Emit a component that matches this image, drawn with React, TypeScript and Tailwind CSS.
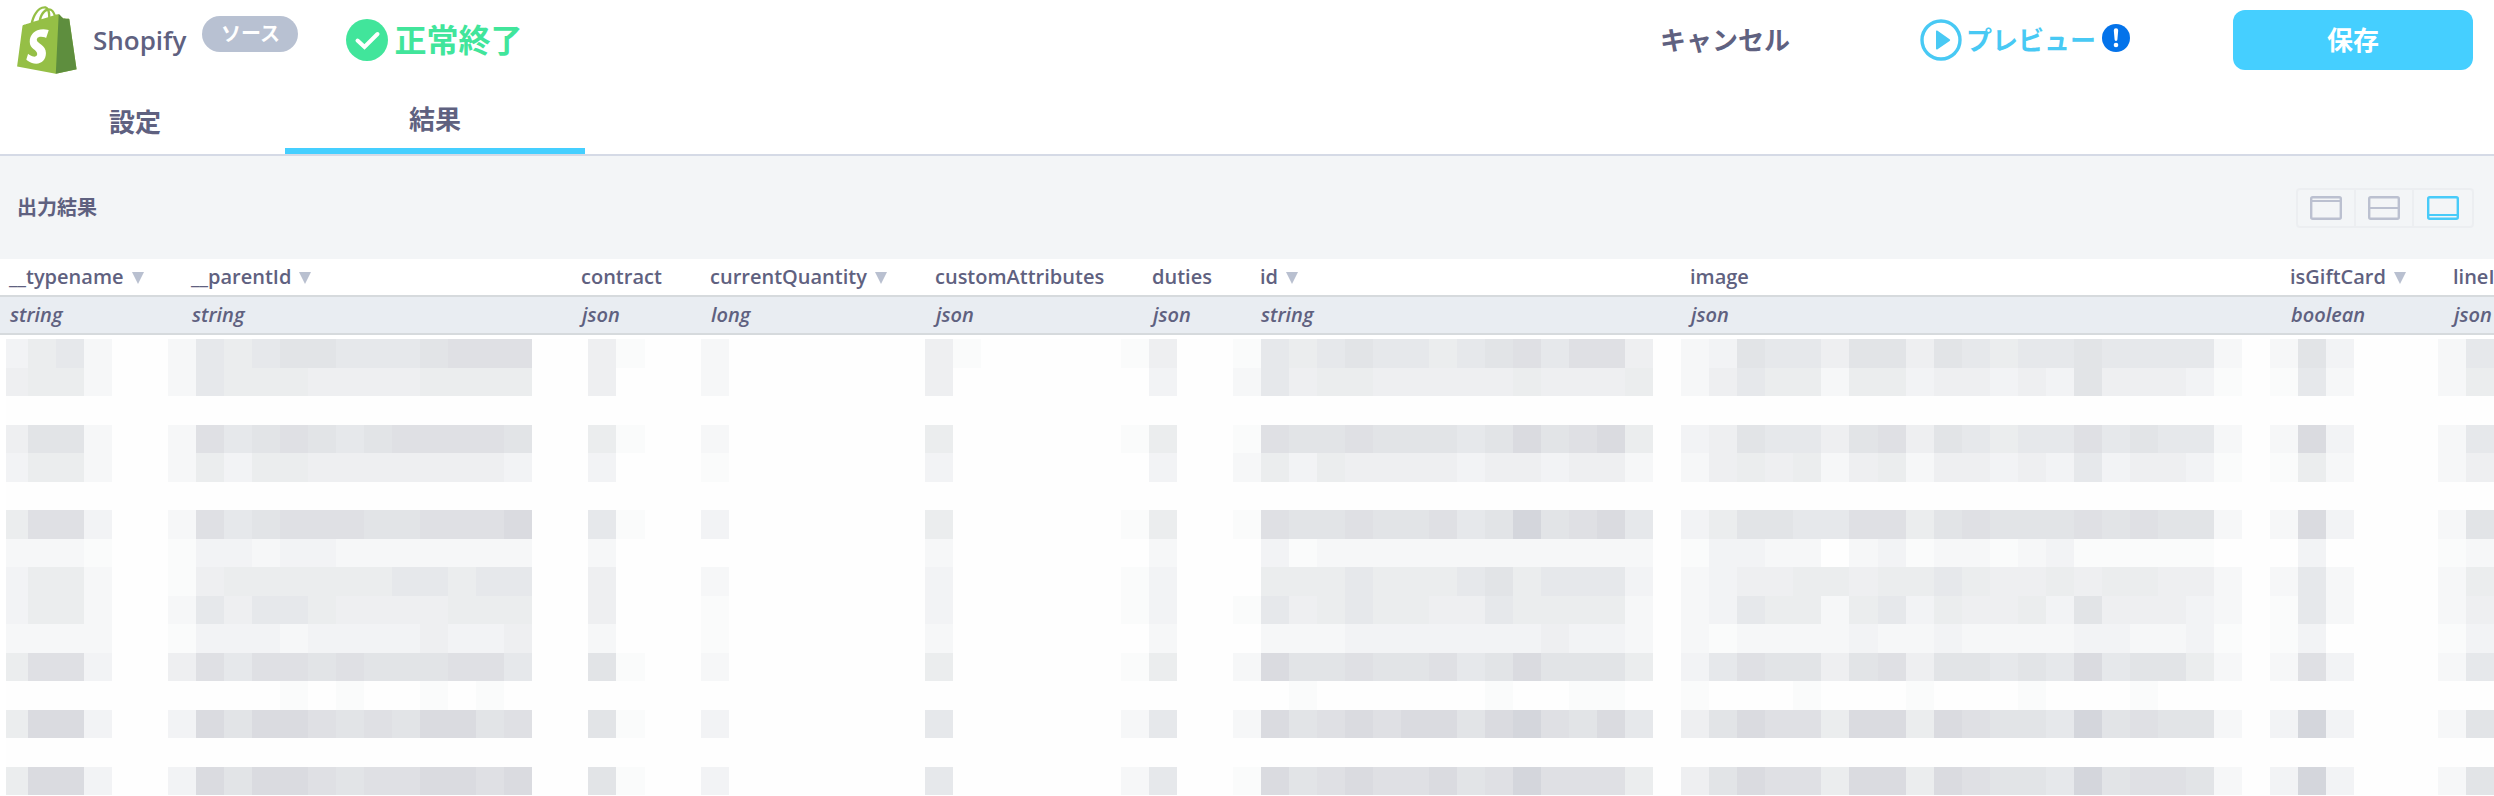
import { useState } from 'react';

type Column = { name: string; type: string; width: string; sortable?: boolean };

const columns: Column[] = [
  { name: '__typename', type: 'string', width: 'w-[182px]', sortable: true },
  { name: '__parentId', type: 'string', width: 'w-[390px]', sortable: true },
  { name: 'contract', type: 'json', width: 'w-[129px]' },
  { name: 'currentQuantity', type: 'long', width: 'w-[225px]', sortable: true },
  { name: 'customAttributes', type: 'json', width: 'w-[217px]' },
  { name: 'duties', type: 'json', width: 'w-[108px]' },
  { name: 'id', type: 'string', width: 'w-[430px]', sortable: true },
  { name: 'image', type: 'json', width: 'w-[600px]' },
  { name: 'isGiftCard', type: 'boolean', width: 'w-[163px]', sortable: true },
  { name: 'lineItem', type: 'json', width: 'w-[140px]' },
];

// Shades of the masked cells, from blank to darkest
const shades: Record<string, string> = {
  '.': '#fefefe',
  a: '#fafbfb',
  b: '#f6f7f8',
  c: '#f2f3f5',
  d: '#eeeff1',
  e: '#ebedee',
  f: '#e6e8eb',
  g: '#e2e4e7',
  h: '#dfe0e4',
  i: '#dadbe0',
  j: '#d4d6dc',
};

const MASK_COLUMNS = 89;

// First mask cell of every block in a row
const blockStarts = [0, 6, 21, 25, 33, 40, 44, 60, 81, 87];

const maskRows = [
  ['cefb', 'bfefggfffghhh', 'da', 'b', 'da', 'ad', 'afefgffefghfhhd', 'bcgffdggdgfeffgffffb', 'bgc', 'bf'],
  ['deeb', 'bfeeeddddeeee', 'd', 'b', 'd', '.c', 'bfdeedddddeddde', 'bdfeebeecddcdcgdddca', 'afb', 'be'],
  [],
  ['dggb', 'bhfghgfghhhhg', 'ea', 'b', 'e', 'ae', 'ahgghgggfgighie', 'cdgffdghdgfeffhfgffb', 'bic', 'bf'],
  ['ceeb', 'beceedddddddc', 'c', 'a', 'c', '.c', 'beceddddcddcddb', 'bdedebdebddcdcfcddca', 'aeb', 'bd'],
  [],
  ['ehhc', 'bhfghhhgghhhi', 'fa', 'c', 'e', 'ae', 'ahgghgghfgjghif', 'ceggffhheghggghghggb', 'bic', 'bg'],
  ['bbba', 'accbccbbbbbbb', 'b', '.', 'b', '.b', '.cabbbbbbbbbbbb', 'accbb.bcabbabcaaaaa.', '.c.', 'ab'],
  ['ceeb', 'adeeeeeeffeff', 'd', 'b', 'c', 'ac', '.eeefeeefgefffc', 'bcddeedeefeddedeeddb', 'bfb', 'be'],
  ['ceeb', 'bfdffeddddeee', 'd', 'a', 'c', 'ac', 'afdefeeddfeeeeb', 'bcfeebefceddecgdddcb', 'afb', 'bd'],
  ['bbbb', 'acccbccccdccd', 'b', 'a', 'b', '.b', '.bbbcccccccdccb', 'babbbbcbbcbbbbccbbca', 'ac.', 'ac'],
  ['ehhc', 'dhfhhghggghhf', 'ga', 'b', 'e', 'ae', 'bigghgghfgiggge', 'cfhggdghdggfgfifggeb', 'bhc', 'bf'],
  ['....', '....a.a..a.a.', '.', '.', '.', '..', '..a......a..aa.', 'a...a...a...a...a...', '...', '..'],
  ['eiic', 'cigiihghgiigh', 'ga', 'c', 'f', 'bf', 'bighihiigijhgif', 'dgihheiieihggfjghggb', 'cjc', 'bg'],
  [],
  ['eiic', 'cigiihghhiihi', 'ga', 'c', 'f', 'bf', 'aighihhighjhhhe', 'dgihheiieihggfjghhgb', 'cjc', 'bg'],
];

function expandRow(blocks: string[]) {
  const cells = Array<string>(MASK_COLUMNS).fill('.');
  blocks.forEach((block, i) => {
    [...block].forEach((shade, offset) => {
      cells[blockStarts[i] + offset] = shade;
    });
  });
  return cells;
}

function ShopifyLogo() {
  return (
    <svg viewBox="0 0 256 292" className="h-[68px] w-[60px] shrink-0" aria-hidden="true">
      <path fill="#95BF46" d="M223.774 57.34c-.201-1.46-1.48-2.268-2.537-2.357-1.055-.088-23.383-1.743-23.383-1.743s-15.507-15.395-17.209-17.099c-1.703-1.703-5.029-1.185-6.32-.805-.19.056-3.388 1.043-8.678 2.68-5.18-14.906-14.322-28.604-30.405-28.604-.444 0-.901.018-1.358.044C129.31 3.407 123.644.779 118.75.779c-37.465 0-55.364 46.835-60.976 70.635-14.558 4.511-24.9 7.718-26.221 8.133-8.126 2.549-8.383 2.805-9.45 10.462C21.3 95.806.038 260.235.038 260.235l165.678 31.042 89.77-19.42S223.973 58.8 223.775 57.34zM156.49 40.848l-14.019 4.339c.005-.988.01-1.96.01-3.023 0-9.264-1.286-16.723-3.349-22.636 8.287 1.04 13.806 10.469 17.358 21.32zm-27.638-19.483c2.304 5.773 3.802 14.058 3.802 25.238 0 .572-.005 1.095-.01 1.624-9.117 2.824-19.024 5.89-28.953 8.966 5.575-21.516 16.025-31.908 25.161-35.828zm-11.131-10.537c1.617 0 3.246.549 4.805 1.622-12.007 5.65-24.877 19.88-30.312 48.297l-22.886 7.088C75.694 46.16 90.81 10.828 117.72 10.828z" />
      <path fill="#5E8E3E" d="M221.237 54.983c-1.055-.088-23.383-1.743-23.383-1.743s-15.507-15.395-17.209-17.099c-.637-.634-1.496-.959-2.394-1.099l-12.527 256.233 89.762-19.418S223.972 58.8 223.774 57.34c-.201-1.46-1.48-2.268-2.537-2.357" />
      <path fill="#FFF" d="M135.242 104.585l-11.069 32.926s-9.698-5.176-21.586-5.176c-17.428 0-18.305 10.937-18.305 13.693 0 15.038 39.2 20.8 39.2 56.024 0 27.713-17.577 45.558-41.277 45.558-28.44 0-42.984-17.7-42.984-17.7l7.615-25.16s14.95 12.835 27.565 12.835c8.243 0 11.596-6.49 11.596-11.232 0-19.616-32.16-20.491-32.16-52.724 0-27.129 19.472-53.382 58.778-53.382 15.145 0 22.627 4.338 22.627 4.338" />
    </svg>
  );
}

function LayoutIcon({ lineY }: { lineY: number }) {
  return (
    <svg viewBox="0 0 32 24" className="h-6 w-8" fill="none" stroke="currentColor" aria-hidden="true">
      <rect x="1.2" y="1.2" width="29.6" height="21.6" rx="1.5" strokeWidth="2.4" />
      <path d={`M1 ${lineY}h30`} strokeWidth="2" />
    </svg>
  );
}

const layouts = [
  { label: '上部表示', lineY: 5 },
  { label: '分割表示', lineY: 12 },
  { label: '下部表示', lineY: 19 },
];

export default function App() {
  const [tab, setTab] = useState('結果');
  const [layout, setLayout] = useState(2);

  return (
    <div className="overflow-hidden bg-white font-['Open_Sans','Noto_Sans_CJK_JP',sans-serif] font-semibold text-[#5f6180]">
      <header className="flex h-20 items-center pr-[21px] pl-[17px]">
        <ShopifyLogo />
        <h1 className="ml-4 text-[26px] leading-8">Shopify</h1>
        <span className="mb-3 ml-4 flex h-9 w-24 items-center justify-center rounded-full bg-[#b8c1d2] text-[20px] font-bold text-white">
          ソース
        </span>
        <div className="ml-12 flex items-center gap-1.5 text-[32px] leading-10 font-bold text-[#41e59b]">
          <svg viewBox="0 0 42 42" className="size-[42px]" aria-hidden="true">
            <circle cx="21" cy="21" r="21" fill="currentColor" />
            <path d="M11.5 21.5l7 6.5 13-13" fill="none" stroke="#fff" strokeWidth="4" strokeLinecap="round" />
          </svg>
          正常終了
        </div>
        <button type="button" className="mr-[130px] ml-auto text-[26px] font-bold">
          キャンセル
        </button>
        <button type="button" className="mr-[103px] flex items-center text-[26px] font-bold text-[#48c9f4]">
          <svg viewBox="0 0 42 42" className="mr-1 size-[42px]" aria-hidden="true">
            <circle cx="21" cy="21" r="19" fill="none" stroke="currentColor" strokeWidth="3.4" />
            <path d="M16 12.5v17a1 1 0 0 0 1.6.8l12-8.4a1 1 0 0 0 0-1.7l-12-8.5a1 1 0 0 0-1.6.8z" fill="currentColor" />
          </svg>
          プレビュー
          <svg viewBox="0 0 28 28" className="mb-1 ml-1.5 size-7" aria-hidden="true">
            <circle cx="14" cy="14" r="14" fill="#0473ea" />
            <path d="M11.8 6.5a2.2 2.2 0 0 1 4.4 0l-.8 9a1.4 1.4 0 0 1-2.8 0z" fill="#fff" />
            <circle cx="14" cy="21" r="2.3" fill="#fff" />
          </svg>
        </button>
        <button type="button" className="h-[60px] w-60 rounded-xl bg-[#45cfff] text-[26px] font-bold text-white">
          保存
        </button>
      </header>

      <nav className="flex h-[76px] items-end border-b-2 border-[#d5dae6] text-[26px] font-bold" role="tablist">
        {['設定', '結果'].map((name) => (
          <button
            key={name}
            type="button"
            role="tab"
            aria-selected={tab === name}
            onClick={() => setTab(name)}
            className={`h-16 w-[300px] first:-ml-[15px] ${tab === name ? 'border-b-[6px] border-[#45cfff]' : ''}`}
          >
            {name}
          </button>
        ))}
      </nav>

      <div className="flex h-[103px] items-center justify-between bg-[#f3f5f7] pr-5 pl-[17px]">
        <h2 className="text-[20px] font-bold">出力結果</h2>
        <div className="flex divide-x-2 divide-[#eceef1] rounded border-2 border-[#eceef1]">
          {layouts.map(({ label, lineY }, i) => (
            <button
              key={label}
              type="button"
              aria-label={label}
              onClick={() => setLayout(i)}
              className={`flex h-9 w-[58px] items-center justify-center ${layout === i ? 'text-[#48cbf9]' : 'text-[#bbc0d0]'}`}
            >
              <LayoutIcon lineY={lineY} />
            </button>
          ))}
        </div>
      </div>

      <table className="w-full table-fixed border-collapse text-left text-[20px] leading-8">
        <thead>
          <tr>
            {columns.map(({ name, width, sortable }) => (
              <th key={name} scope="col" className={`h-[37px] p-0 pl-[9px] font-semibold whitespace-nowrap ${width}`}>
                {name}
                {sortable && (
                  <svg viewBox="0 0 12 12" className="ml-2 inline size-3 align-baseline" aria-hidden="true">
                    <path d="M0 0h12L6 12z" fill="#b9c0d0" />
                  </svg>
                )}
              </th>
            ))}
          </tr>
          <tr className="border-y-2 border-[#d6dadd] bg-[#e9edf2] italic">
            {columns.map(({ name, type }) => (
              <td key={name} className="h-[38px] p-0 pl-2.5">
                {type}
              </td>
            ))}
          </tr>
        </thead>
        <tbody>
          <tr>
            <td colSpan={columns.length} className="p-0 pt-1">
              <div className="grid h-[456px] w-screen grid-cols-[repeat(89,minmax(0,1fr))] grid-rows-[repeat(16,minmax(0,1fr))]">
                {maskRows.flatMap((blocks, row) =>
                  expandRow(blocks).map((shade, col) => (
                    <div
                      key={`${row}-${col}`}
                      className={col === 0 ? 'border-l-[6px] border-white' : ''}
                      style={{ backgroundColor: shades[shade] }}
                    />
                  ))
                )}
              </div>
            </td>
          </tr>
        </tbody>
      </table>
    </div>
  );
}
